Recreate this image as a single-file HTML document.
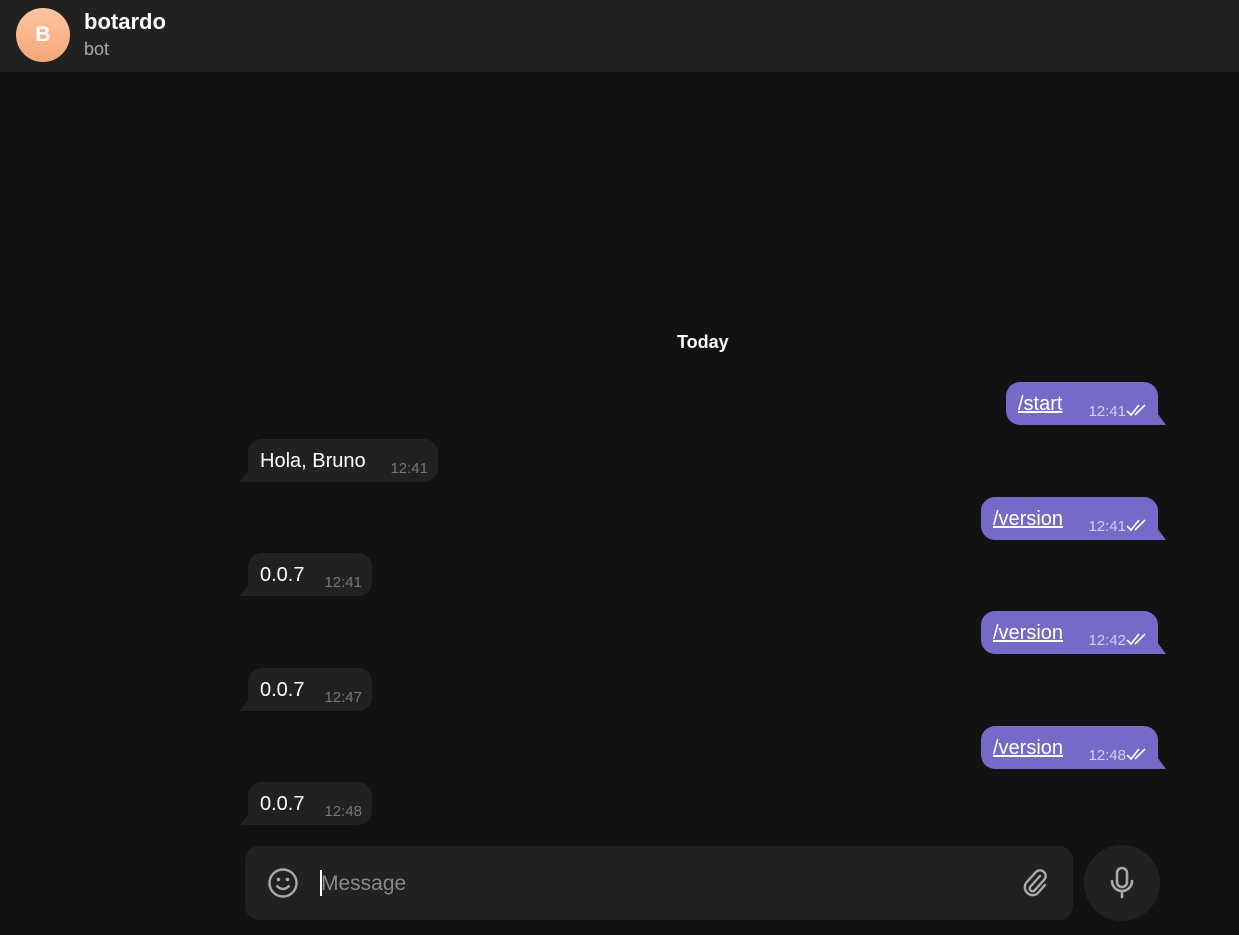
<!DOCTYPE html><html><head><style>
body{margin:0;width:1239px;height:935px;background:#121212;font-family:"Liberation Sans",sans-serif;position:relative;overflow:hidden}
.hdr{position:absolute;left:0;top:0;width:1239px;height:72px;background:#212121}
.av{position:absolute;left:16px;top:8px;width:54px;height:54px;border-radius:50%;background:linear-gradient(#ffc4a0,#f5a77a);color:#fff;font-weight:bold;font-size:21px;text-align:center;line-height:54px}
.nm{position:absolute;left:84px;top:9px;color:#fff;font-weight:bold;font-size:22px}
.st{position:absolute;left:84px;top:39px;color:#aaa;font-size:18px}
.today{position:absolute;left:677px;top:332px;color:#fff;font-weight:bold;font-size:18px}
.b{position:absolute;height:43px;border-radius:14px;font-size:20px;color:#fff}
.o{background:#766ac8;border-bottom-right-radius:0}
.i{background:#212121;border-bottom-left-radius:0}
.b .t{position:absolute;left:12px;top:11px}
.o .t{text-decoration:underline}
.b .tm{position:absolute;bottom:5px;font-size:15px}
.o .tm{right:32px;color:#d4cff0}
.i .tm{right:10px;color:#777}
.ck{position:absolute;right:8px;bottom:8px}
.tr{position:absolute;bottom:0;width:9px;height:12px}
.o .tr{right:-8px;background:#766ac8;clip-path:polygon(0 0,0 100%,100% 100%)}
.i .tr{left:-8px;background:#212121;clip-path:polygon(100% 0,100% 100%,0 100%)}
.inp{position:absolute;left:245px;top:846px;width:828px;height:74px;background:#212121;border-radius:14px}
.mic{position:absolute;left:1084px;top:845px;width:76px;height:76px;border-radius:50%;background:#212121}
</style></head><body>
<div class="hdr"><div class="av">B</div><div class="nm">botardo</div><div class="st">bot</div></div>
<div class="today">Today</div>
<div class="b o" style="left:1006px;top:382px;width:152px"><span class="t">/start</span><span class="tm">12:41</span><svg class="ck" width="24" height="14" viewBox="0 0 24 14"><path d="M1 8l4 4L13 2M9 12L19 2" stroke="#fff" stroke-width="1.6" fill="none"/></svg><div class="tr"></div></div>
<div class="b i" style="left:248px;top:439px;width:190px"><span class="t">Hola, Bruno</span><span class="tm">12:41</span><div class="tr"></div></div>
<div class="b o" style="left:981px;top:497px;width:177px"><span class="t">/version</span><span class="tm">12:41</span><svg class="ck" width="24" height="14" viewBox="0 0 24 14"><path d="M1 8l4 4L13 2M9 12L19 2" stroke="#fff" stroke-width="1.6" fill="none"/></svg><div class="tr"></div></div>
<div class="b i" style="left:248px;top:553px;width:124px"><span class="t">0.0.7</span><span class="tm">12:41</span><div class="tr"></div></div>
<div class="b o" style="left:981px;top:611px;width:177px"><span class="t">/version</span><span class="tm">12:42</span><svg class="ck" width="24" height="14" viewBox="0 0 24 14"><path d="M1 8l4 4L13 2M9 12L19 2" stroke="#fff" stroke-width="1.6" fill="none"/></svg><div class="tr"></div></div>
<div class="b i" style="left:248px;top:668px;width:124px"><span class="t">0.0.7</span><span class="tm">12:47</span><div class="tr"></div></div>
<div class="b o" style="left:981px;top:726px;width:177px"><span class="t">/version</span><span class="tm">12:48</span><svg class="ck" width="24" height="14" viewBox="0 0 24 14"><path d="M1 8l4 4L13 2M9 12L19 2" stroke="#fff" stroke-width="1.6" fill="none"/></svg><div class="tr"></div></div>
<div class="b i" style="left:248px;top:782px;width:124px"><span class="t">0.0.7</span><span class="tm">12:48</span><div class="tr"></div></div>
<div class="inp">
<svg style="position:absolute;left:21px;top:20px" width="34" height="34" viewBox="0 0 34 34"><circle cx="17" cy="17" r="13.5" stroke="#aaa" stroke-width="2.4" fill="none"/><circle cx="12.5" cy="13.5" r="1.8" fill="#aaa"/><circle cx="21.5" cy="13.5" r="1.8" fill="#aaa"/><path d="M10.5 19.5q6.5 7 13 0" stroke="#aaa" stroke-width="2.4" fill="none"/></svg>
<div style="position:absolute;left:75px;top:24px;width:2px;height:26px;background:#fff"></div>
<div style="position:absolute;left:76px;top:26px;font-size:21px;color:#888">Message</div>
<svg style="position:absolute;left:773px;top:20px" width="34" height="34" viewBox="0 0 34 34"><path d="M22 10L12 21a3 3 0 0 0 4 4l10-11a5.5 5.5 0 0 0-8-8L8 17a8 8 0 0 0 11 11l8-9" stroke="#aaa" stroke-width="2.4" fill="none" stroke-linecap="round"/></svg>
</div>
<div class="mic"><svg style="position:absolute;left:22px;top:20px" width="32" height="36" viewBox="0 0 32 36"><rect x="11" y="3" width="10" height="19" rx="5" stroke="#aaa" stroke-width="2.6" fill="none"/><path d="M6 16a10 10 0 0 0 20 0M16 26v6" stroke="#aaa" stroke-width="2.6" fill="none" stroke-linecap="round"/></svg></div>
</body></html>
